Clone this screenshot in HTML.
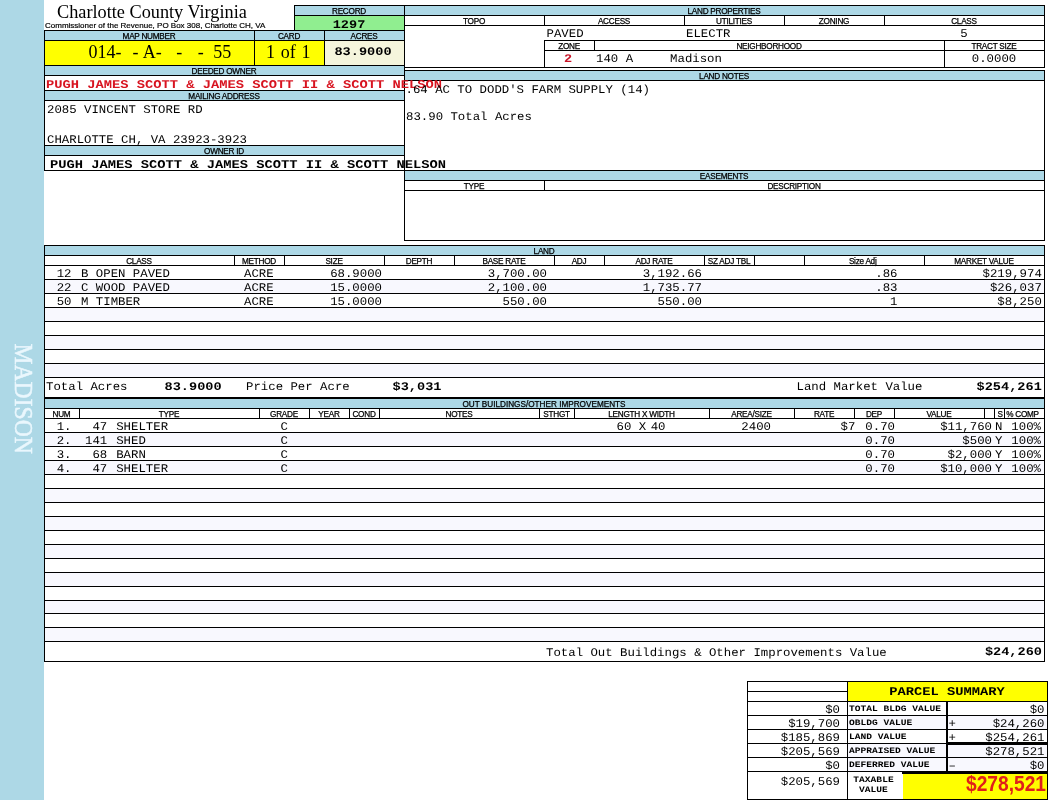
<!DOCTYPE html>
<html lang="en"><head><meta charset="utf-8"><title>Charlotte County Virginia - Property Record</title>
<style>
html,body{margin:0;padding:0;background:#fff}
#pg{will-change:transform;position:relative;width:1050px;height:800px;overflow:hidden;background:#fff;color:#000}
.r,.t{position:absolute}
.t{white-space:pre;line-height:1}
.lb{font:8.2px 'Liberation Sans',sans-serif;line-height:1;letter-spacing:-.25px;-webkit-text-stroke:.25px #000}
.m{font:12.35px 'Liberation Mono',monospace;line-height:1;text-rendering:geometricPrecision;transform:scaleY(0.95);transform-origin:0 9px;}
.mb{font:bold 13.6px 'Liberation Mono',monospace;line-height:1;text-rendering:geometricPrecision;transform:scaleY(0.86);transform-origin:0 9px;}
.mbs{font:bold 9.6px 'Liberation Mono',monospace;line-height:1;text-rendering:geometricPrecision;transform:scaleY(0.86);transform-origin:0 7px;}
.ps{font:bold 13.75px 'Liberation Mono',monospace;line-height:1;text-rendering:geometricPrecision;transform:scaleY(0.86);transform-origin:0 9px;}
.s17{font:18px 'Liberation Serif',serif;line-height:1;}
.s18{font:18.25px 'Liberation Serif',serif;line-height:1;}
.mbo{font:bold 13.75px 'Liberation Mono',monospace;line-height:1;text-rendering:geometricPrecision;transform:scaleY(0.86);transform-origin:0 9px;}
.big{font:bold 19.2px 'Liberation Sans',sans-serif;line-height:1;color:#e0201a;transform:scaleY(1.11);transform-origin:0 16px}
.sub{font:8px 'Liberation Sans',sans-serif;line-height:1;-webkit-text-stroke:.2px #000}
.sd{font:23.6px 'Liberation Serif',serif;line-height:1;}
.sd{left:0;top:0;color:#eaf7fd;-webkit-text-stroke:.5px #eaf7fd;transform-origin:0 0;transform:translate(14.8px,343.6px) rotate(90deg) scaleY(1.05) translateY(-19px)}
</style></head>
<body><div id="pg">
<div class="r" style="left:0px;top:0px;width:44px;height:800px;background:#add8e6"></div>
<div class="t sd">MADISON</div>
<div class="t s18" style="left:57px;top:3px">Charlotte County Virginia</div>
<div class="t sub" style="left:45px;top:22px">Commissioner of the Revenue, PO Box 308, Charlotte CH, VA</div>
<div class="r" style="left:295px;top:6px;width:109px;height:9px;background:#add8e6"></div>
<div class="r" style="left:295px;top:16px;width:109px;height:14px;background:#90ee90"></div>
<div class="r" style="left:294px;top:5px;width:111px;height:1px;background:#000"></div>
<div class="r" style="left:294px;top:15px;width:111px;height:1px;background:#000"></div>
<div class="r" style="left:294px;top:5px;width:1px;height:26px;background:#000"></div>
<div class="t lb" style="left:149px;width:400px;text-align:center;top:8px">RECORD</div>
<div class="t mb" style="left:149px;width:400px;text-align:center;top:19px">1297</div>
<div class="r" style="left:45px;top:31px;width:359px;height:9px;background:#add8e6"></div>
<div class="r" style="left:45px;top:41px;width:209px;height:24px;background:#ffff00"></div>
<div class="r" style="left:255px;top:41px;width:69px;height:24px;background:#ffff00"></div>
<div class="r" style="left:325px;top:41px;width:79px;height:24px;background:#f5f5dc"></div>
<div class="r" style="left:45px;top:66px;width:359px;height:9px;background:#add8e6"></div>
<div class="r" style="left:45px;top:91px;width:359px;height:9px;background:#add8e6"></div>
<div class="r" style="left:45px;top:146px;width:359px;height:9px;background:#add8e6"></div>
<div class="r" style="left:44px;top:30px;width:361px;height:1px;background:#000"></div>
<div class="r" style="left:44px;top:40px;width:361px;height:1px;background:#000"></div>
<div class="r" style="left:44px;top:65px;width:361px;height:1px;background:#000"></div>
<div class="r" style="left:44px;top:75px;width:361px;height:1px;background:#000"></div>
<div class="r" style="left:44px;top:90px;width:361px;height:1px;background:#000"></div>
<div class="r" style="left:44px;top:100px;width:361px;height:1px;background:#000"></div>
<div class="r" style="left:44px;top:145px;width:361px;height:1px;background:#000"></div>
<div class="r" style="left:44px;top:155px;width:361px;height:1px;background:#000"></div>
<div class="r" style="left:44px;top:170px;width:361px;height:1px;background:#000"></div>
<div class="r" style="left:44px;top:30px;width:1px;height:141px;background:#000"></div>
<div class="r" style="left:254px;top:30px;width:1px;height:36px;background:#000"></div>
<div class="r" style="left:324px;top:30px;width:1px;height:36px;background:#000"></div>
<div class="t lb" style="left:-51px;width:400px;text-align:center;top:33px">MAP NUMBER</div>
<div class="t lb" style="left:89px;width:400px;text-align:center;top:33px">CARD</div>
<div class="t lb" style="left:164px;width:400px;text-align:center;top:33px">ACRES</div>
<div class="t s17" style="left:88.4px;top:43px">014-</div>
<div class="t s17" style="left:132.5px;top:43px">-</div>
<div class="t s17" style="left:142.7px;top:43px">A-</div>
<div class="t s17" style="left:176.2px;top:43px">-</div>
<div class="t s17" style="left:197.7px;top:43px">-</div>
<div class="t s17" style="left:213.3px;top:43px">55</div>
<div class="t s17" style="left:88.2px;width:400px;text-align:center;top:43px;word-spacing:1.2px">1 of 1</div>
<div class="t mb" style="left:163px;width:400px;text-align:center;top:46px">83.9000</div>
<div class="t lb" style="left:24px;width:400px;text-align:center;top:68px">DEEDED OWNER</div>
<div class="t lb" style="left:24px;width:400px;text-align:center;top:93px">MAILING ADDRESS</div>
<div class="t m" style="left:47px;top:104px">2085 VINCENT STORE RD</div>
<div class="t m" style="left:47px;top:134px">CHARLOTTE CH, VA 23923-3923</div>
<div class="t lb" style="left:24px;width:400px;text-align:center;top:148px">OWNER ID</div>
<div class="r" style="left:405px;top:6px;width:639px;height:9px;background:#add8e6"></div>
<div class="r" style="left:404px;top:5px;width:641px;height:1px;background:#000"></div>
<div class="r" style="left:404px;top:15px;width:641px;height:1px;background:#000"></div>
<div class="r" style="left:404px;top:25px;width:641px;height:1px;background:#000"></div>
<div class="r" style="left:544px;top:40px;width:501px;height:1px;background:#000"></div>
<div class="r" style="left:544px;top:50px;width:501px;height:1px;background:#000"></div>
<div class="r" style="left:404px;top:67px;width:641px;height:1px;background:#000"></div>
<div class="r" style="left:404px;top:5px;width:1px;height:236px;background:#000"></div>
<div class="r" style="left:1044px;top:5px;width:1px;height:63px;background:#000"></div>
<div class="r" style="left:1044px;top:70px;width:1px;height:171px;background:#000"></div>
<div class="r" style="left:544px;top:15px;width:1px;height:11px;background:#000"></div>
<div class="r" style="left:684px;top:15px;width:1px;height:11px;background:#000"></div>
<div class="r" style="left:784px;top:15px;width:1px;height:11px;background:#000"></div>
<div class="r" style="left:884px;top:15px;width:1px;height:11px;background:#000"></div>
<div class="r" style="left:544px;top:40px;width:1px;height:28px;background:#000"></div>
<div class="r" style="left:594px;top:40px;width:1px;height:11px;background:#000"></div>
<div class="r" style="left:944px;top:40px;width:1px;height:28px;background:#000"></div>
<div class="t lb" style="left:524px;width:400px;text-align:center;top:8px">LAND PROPERTIES</div>
<div class="t lb" style="left:274px;width:400px;text-align:center;top:18px">TOPO</div>
<div class="t lb" style="left:414px;width:400px;text-align:center;top:18px">ACCESS</div>
<div class="t lb" style="left:534px;width:400px;text-align:center;top:18px">UTILITIES</div>
<div class="t lb" style="left:634px;width:400px;text-align:center;top:18px">ZONING</div>
<div class="t lb" style="left:764px;width:400px;text-align:center;top:18px">CLASS</div>
<div class="t m" style="left:546.5px;top:28px">PAVED</div>
<div class="t m" style="left:686px;top:28px">ELECTR</div>
<div class="t m" style="left:764px;width:400px;text-align:center;top:28px">5</div>
<div class="t lb" style="left:369px;width:400px;text-align:center;top:43px">ZONE</div>
<div class="t lb" style="left:569px;width:400px;text-align:center;top:43px">NEIGHBORHOOD</div>
<div class="t lb" style="left:794px;width:400px;text-align:center;top:43px">TRACT SIZE</div>
<div class="t mb" style="left:368px;width:400px;text-align:center;top:53px;color:#c81428">2</div>
<div class="t m" style="left:596px;top:53px">140 A     Madison</div>
<div class="t m" style="left:794px;width:400px;text-align:center;top:53px">0.0000</div>
<div class="r" style="left:405px;top:71px;width:639px;height:9px;background:#add8e6"></div>
<div class="r" style="left:404px;top:70px;width:641px;height:1px;background:#000"></div>
<div class="r" style="left:404px;top:80px;width:641px;height:1px;background:#000"></div>
<div class="t lb" style="left:524px;width:400px;text-align:center;top:73px">LAND NOTES</div>
<div class="t mbo" style="left:46px;top:79px;color:#d81420">PUGH JAMES SCOTT &amp; JAMES SCOTT II &amp; SCOTT NELSON</div>
<div class="t m" style="left:405.5px;top:84px">.64 AC TO DODD&#x27;S FARM SUPPLY (14)</div>
<div class="t m" style="left:406px;top:111px">83.90 Total Acres</div>
<div class="t mbo" style="left:50px;top:159px">PUGH JAMES SCOTT &amp; JAMES SCOTT II &amp; SCOTT NELSON</div>
<div class="r" style="left:405px;top:171px;width:639px;height:9px;background:#add8e6"></div>
<div class="r" style="left:404px;top:170px;width:641px;height:1px;background:#000"></div>
<div class="r" style="left:404px;top:180px;width:641px;height:1px;background:#000"></div>
<div class="r" style="left:404px;top:190px;width:641px;height:1px;background:#000"></div>
<div class="r" style="left:404px;top:240px;width:641px;height:1px;background:#000"></div>
<div class="r" style="left:544px;top:180px;width:1px;height:11px;background:#000"></div>
<div class="t lb" style="left:524px;width:400px;text-align:center;top:173px">EASEMENTS</div>
<div class="t lb" style="left:274px;width:400px;text-align:center;top:183px">TYPE</div>
<div class="t lb" style="left:594px;width:400px;text-align:center;top:183px">DESCRIPTION</div>
<div class="r" style="left:45px;top:246px;width:999px;height:9px;background:#add8e6"></div>
<div class="r" style="left:44px;top:245px;width:1001px;height:1px;background:#000"></div>
<div class="r" style="left:44px;top:255px;width:1001px;height:1px;background:#000"></div>
<div class="r" style="left:44px;top:265px;width:1001px;height:1px;background:#000"></div>
<div class="r" style="left:44px;top:245px;width:1px;height:417px;background:#000"></div>
<div class="r" style="left:1044px;top:245px;width:1px;height:417px;background:#000"></div>
<div class="r" style="left:234px;top:255px;width:1px;height:11px;background:#000"></div>
<div class="r" style="left:284px;top:255px;width:1px;height:11px;background:#000"></div>
<div class="r" style="left:384px;top:255px;width:1px;height:11px;background:#000"></div>
<div class="r" style="left:454px;top:255px;width:1px;height:11px;background:#000"></div>
<div class="r" style="left:554px;top:255px;width:1px;height:11px;background:#000"></div>
<div class="r" style="left:604px;top:255px;width:1px;height:11px;background:#000"></div>
<div class="r" style="left:704px;top:255px;width:1px;height:11px;background:#000"></div>
<div class="r" style="left:754px;top:255px;width:1px;height:11px;background:#000"></div>
<div class="r" style="left:804px;top:255px;width:1px;height:11px;background:#000"></div>
<div class="r" style="left:924px;top:255px;width:1px;height:11px;background:#000"></div>
<div class="t lb" style="left:344px;width:400px;text-align:center;top:248px">LAND</div>
<div class="t lb" style="left:-61px;width:400px;text-align:center;top:258px">CLASS</div>
<div class="t lb" style="left:59px;width:400px;text-align:center;top:258px">METHOD</div>
<div class="t lb" style="left:134px;width:400px;text-align:center;top:258px">SIZE</div>
<div class="t lb" style="left:219px;width:400px;text-align:center;top:258px">DEPTH</div>
<div class="t lb" style="left:304px;width:400px;text-align:center;top:258px">BASE RATE</div>
<div class="t lb" style="left:379px;width:400px;text-align:center;top:258px">ADJ</div>
<div class="t lb" style="left:454px;width:400px;text-align:center;top:258px">ADJ RATE</div>
<div class="t lb" style="left:529px;width:400px;text-align:center;top:258px">SZ ADJ TBL</div>
<div class="t lb" style="left:662.7px;width:400px;text-align:center;top:258px">Size Adj</div>
<div class="t lb" style="left:784px;width:400px;text-align:center;top:258px">MARKET VALUE</div>
<div class="r" style="left:44px;top:279px;width:1001px;height:1px;background:#000"></div>
<div class="r" style="left:44px;top:293px;width:1001px;height:1px;background:#000"></div>
<div class="r" style="left:45px;top:280px;width:999px;height:13px;background:#f8f8fe"></div>
<div class="r" style="left:44px;top:307px;width:1001px;height:1px;background:#000"></div>
<div class="r" style="left:44px;top:321px;width:1001px;height:1px;background:#000"></div>
<div class="r" style="left:45px;top:308px;width:999px;height:13px;background:#f8f8fe"></div>
<div class="r" style="left:44px;top:335px;width:1001px;height:1px;background:#000"></div>
<div class="r" style="left:44px;top:349px;width:1001px;height:1px;background:#000"></div>
<div class="r" style="left:45px;top:336px;width:999px;height:13px;background:#f8f8fe"></div>
<div class="r" style="left:44px;top:363px;width:1001px;height:1px;background:#000"></div>
<div class="r" style="left:44px;top:377px;width:1001px;height:1px;background:#000"></div>
<div class="r" style="left:45px;top:364px;width:999px;height:13px;background:#f8f8fe"></div>
<div class="t m" style="left:56.7px;top:268px">12</div>
<div class="t m" style="left:81px;top:268px">B OPEN PAVED</div>
<div class="t m" style="left:244px;top:268px">ACRE</div>
<div class="t m" style="right:668px;top:268px">68.9000</div>
<div class="t m" style="right:503px;top:268px">3,700.00</div>
<div class="t m" style="right:348px;top:268px">3,192.66</div>
<div class="t m" style="right:152.5px;top:268px">.86</div>
<div class="t m" style="right:8.2px;top:268px">$219,974</div>
<div class="t m" style="left:56.7px;top:282px">22</div>
<div class="t m" style="left:81px;top:282px">C WOOD PAVED</div>
<div class="t m" style="left:244px;top:282px">ACRE</div>
<div class="t m" style="right:668px;top:282px">15.0000</div>
<div class="t m" style="right:503px;top:282px">2,100.00</div>
<div class="t m" style="right:348px;top:282px">1,735.77</div>
<div class="t m" style="right:152.5px;top:282px">.83</div>
<div class="t m" style="right:8.2px;top:282px">$26,037</div>
<div class="t m" style="left:56.7px;top:296px">50</div>
<div class="t m" style="left:81px;top:296px">M TIMBER</div>
<div class="t m" style="left:244px;top:296px">ACRE</div>
<div class="t m" style="right:668px;top:296px">15.0000</div>
<div class="t m" style="right:503px;top:296px">550.00</div>
<div class="t m" style="right:348px;top:296px">550.00</div>
<div class="t m" style="right:152.5px;top:296px">1</div>
<div class="t m" style="right:8.2px;top:296px">$8,250</div>
<div class="t m" style="left:46px;top:381px">Total Acres</div>
<div class="t mb" style="left:164.5px;top:381px">83.9000</div>
<div class="t m" style="left:246px;top:381px">Price Per Acre</div>
<div class="t mb" style="left:392.5px;top:381px">$3,031</div>
<div class="t m" style="left:796.5px;top:381px">Land Market Value</div>
<div class="t mb" style="right:8.2px;top:381px">$254,261</div>
<div class="r" style="left:44px;top:397px;width:1001px;height:2px;background:#000"></div>
<div class="r" style="left:45px;top:399px;width:999px;height:9px;background:#add8e6"></div>
<div class="r" style="left:44px;top:408px;width:1001px;height:1px;background:#000"></div>
<div class="r" style="left:44px;top:418px;width:1001px;height:1px;background:#000"></div>
<div class="r" style="left:79px;top:408px;width:1px;height:11px;background:#000"></div>
<div class="r" style="left:259px;top:408px;width:1px;height:11px;background:#000"></div>
<div class="r" style="left:309px;top:408px;width:1px;height:11px;background:#000"></div>
<div class="r" style="left:349px;top:408px;width:1px;height:11px;background:#000"></div>
<div class="r" style="left:379px;top:408px;width:1px;height:11px;background:#000"></div>
<div class="r" style="left:539px;top:408px;width:1px;height:11px;background:#000"></div>
<div class="r" style="left:574px;top:408px;width:1px;height:11px;background:#000"></div>
<div class="r" style="left:709px;top:408px;width:1px;height:11px;background:#000"></div>
<div class="r" style="left:794px;top:408px;width:1px;height:11px;background:#000"></div>
<div class="r" style="left:854px;top:408px;width:1px;height:11px;background:#000"></div>
<div class="r" style="left:894px;top:408px;width:1px;height:11px;background:#000"></div>
<div class="r" style="left:984px;top:408px;width:1px;height:11px;background:#000"></div>
<div class="r" style="left:994px;top:408px;width:1px;height:11px;background:#000"></div>
<div class="r" style="left:1004px;top:408px;width:1px;height:11px;background:#000"></div>
<div class="t lb" style="left:344px;width:400px;text-align:center;top:401px;letter-spacing:0">OUT BUILDINGS/OTHER IMPROVEMENTS</div>
<div class="t lb" style="left:-138.5px;width:400px;text-align:center;top:411px">NUM</div>
<div class="t lb" style="left:-31px;width:400px;text-align:center;top:411px">TYPE</div>
<div class="t lb" style="left:84px;width:400px;text-align:center;top:411px">GRADE</div>
<div class="t lb" style="left:129px;width:400px;text-align:center;top:411px">YEAR</div>
<div class="t lb" style="left:164px;width:400px;text-align:center;top:411px">COND</div>
<div class="t lb" style="left:259px;width:400px;text-align:center;top:411px">NOTES</div>
<div class="t lb" style="left:356.5px;width:400px;text-align:center;top:411px">STHGT</div>
<div class="t lb" style="left:441.5px;width:400px;text-align:center;top:411px">LENGTH X WIDTH</div>
<div class="t lb" style="left:551.5px;width:400px;text-align:center;top:411px">AREA/SIZE</div>
<div class="t lb" style="left:624px;width:400px;text-align:center;top:411px">RATE</div>
<div class="t lb" style="left:674px;width:400px;text-align:center;top:411px">DEP</div>
<div class="t lb" style="left:739px;width:400px;text-align:center;top:411px">VALUE</div>
<div class="t lb" style="left:800px;width:400px;text-align:center;top:411px">S</div>
<div class="t lb" style="left:822.5px;width:400px;text-align:center;top:411px">% COMP</div>
<div class="r" style="left:44px;top:432px;width:1001px;height:1px;background:#000"></div>
<div class="r" style="left:45px;top:433px;width:999px;height:13px;background:#f8f8fe"></div>
<div class="r" style="left:44px;top:446px;width:1001px;height:1px;background:#000"></div>
<div class="r" style="left:44px;top:460px;width:1001px;height:1px;background:#000"></div>
<div class="r" style="left:45px;top:461px;width:999px;height:13px;background:#f8f8fe"></div>
<div class="r" style="left:44px;top:474px;width:1001px;height:1px;background:#000"></div>
<div class="r" style="left:44px;top:488px;width:1001px;height:1px;background:#000"></div>
<div class="r" style="left:45px;top:489px;width:999px;height:13px;background:#f8f8fe"></div>
<div class="r" style="left:44px;top:502px;width:1001px;height:1px;background:#000"></div>
<div class="r" style="left:44px;top:516px;width:1001px;height:1px;background:#000"></div>
<div class="r" style="left:45px;top:517px;width:999px;height:13px;background:#f8f8fe"></div>
<div class="r" style="left:44px;top:530px;width:1001px;height:1px;background:#000"></div>
<div class="r" style="left:44px;top:544px;width:1001px;height:1px;background:#000"></div>
<div class="r" style="left:45px;top:545px;width:999px;height:13px;background:#f8f8fe"></div>
<div class="r" style="left:44px;top:558px;width:1001px;height:1px;background:#000"></div>
<div class="r" style="left:44px;top:572px;width:1001px;height:1px;background:#000"></div>
<div class="r" style="left:45px;top:573px;width:999px;height:13px;background:#f8f8fe"></div>
<div class="r" style="left:44px;top:586px;width:1001px;height:1px;background:#000"></div>
<div class="r" style="left:44px;top:600px;width:1001px;height:1px;background:#000"></div>
<div class="r" style="left:45px;top:601px;width:999px;height:12px;background:#f8f8fe"></div>
<div class="r" style="left:44px;top:613px;width:1001px;height:1px;background:#000"></div>
<div class="r" style="left:44px;top:627px;width:1001px;height:1px;background:#000"></div>
<div class="r" style="left:45px;top:628px;width:999px;height:13px;background:#f8f8fe"></div>
<div class="r" style="left:44px;top:641px;width:1001px;height:1px;background:#000"></div>
<div class="r" style="left:44px;top:661px;width:1001px;height:1px;background:#000"></div>
<div class="t m" style="left:56.7px;top:421px">1.</div>
<div class="t m" style="right:942.8px;top:421px">47</div>
<div class="t m" style="left:116.2px;top:421px">SHELTER</div>
<div class="t m" style="left:280.5px;top:421px">C</div>
<div class="t m" style="left:616.5px;top:421px">60 X</div>
<div class="t m" style="left:650.7px;top:421px">40</div>
<div class="t m" style="right:279px;top:421px">2400</div>
<div class="t m" style="right:194.7px;top:421px">$7</div>
<div class="t m" style="right:155px;top:421px">0.70</div>
<div class="t m" style="right:58px;top:421px">$11,760</div>
<div class="t m" style="left:995px;top:421px">N</div>
<div class="t m" style="right:9px;top:421px">100%</div>
<div class="t m" style="left:56.7px;top:435px">2.</div>
<div class="t m" style="right:942.8px;top:435px">141</div>
<div class="t m" style="left:116.2px;top:435px">SHED</div>
<div class="t m" style="left:280.5px;top:435px">C</div>
<div class="t m" style="right:155px;top:435px">0.70</div>
<div class="t m" style="right:58px;top:435px">$500</div>
<div class="t m" style="left:995px;top:435px">Y</div>
<div class="t m" style="right:9px;top:435px">100%</div>
<div class="t m" style="left:56.7px;top:449px">3.</div>
<div class="t m" style="right:942.8px;top:449px">68</div>
<div class="t m" style="left:116.2px;top:449px">BARN</div>
<div class="t m" style="left:280.5px;top:449px">C</div>
<div class="t m" style="right:155px;top:449px">0.70</div>
<div class="t m" style="right:58px;top:449px">$2,000</div>
<div class="t m" style="left:995px;top:449px">Y</div>
<div class="t m" style="right:9px;top:449px">100%</div>
<div class="t m" style="left:56.7px;top:463px">4.</div>
<div class="t m" style="right:942.8px;top:463px">47</div>
<div class="t m" style="left:116.2px;top:463px">SHELTER</div>
<div class="t m" style="left:280.5px;top:463px">C</div>
<div class="t m" style="right:155px;top:463px">0.70</div>
<div class="t m" style="right:58px;top:463px">$10,000</div>
<div class="t m" style="left:995px;top:463px">Y</div>
<div class="t m" style="right:9px;top:463px">100%</div>
<div class="t m" style="left:546px;top:647px">Total Out Buildings &amp; Other Improvements Value</div>
<div class="t mb" style="right:8px;top:646px">$24,260</div>
<div class="r" style="left:848px;top:682px;width:199px;height:19px;background:#ffff00"></div>
<div class="r" style="left:903px;top:774px;width:144px;height:25px;background:#ffff00"></div>
<div class="r" style="left:747px;top:681px;width:101px;height:1px;background:#000"></div>
<div class="r" style="left:747px;top:691px;width:101px;height:1px;background:#000"></div>
<div class="r" style="left:747px;top:701px;width:101px;height:1px;background:#000"></div>
<div class="r" style="left:747px;top:715px;width:101px;height:1px;background:#000"></div>
<div class="r" style="left:747px;top:729px;width:101px;height:1px;background:#000"></div>
<div class="r" style="left:747px;top:743px;width:101px;height:1px;background:#000"></div>
<div class="r" style="left:747px;top:757px;width:101px;height:1px;background:#000"></div>
<div class="r" style="left:747px;top:771px;width:101px;height:1px;background:#000"></div>
<div class="r" style="left:747px;top:799px;width:101px;height:1px;background:#000"></div>
<div class="r" style="left:847px;top:681px;width:201px;height:1px;background:#000"></div>
<div class="r" style="left:847px;top:701px;width:201px;height:1px;background:#000"></div>
<div class="r" style="left:847px;top:799px;width:201px;height:1px;background:#000"></div>
<div class="r" style="left:847px;top:715px;width:201px;height:1px;background:#000"></div>
<div class="r" style="left:847px;top:729px;width:201px;height:1px;background:#000"></div>
<div class="r" style="left:847px;top:757px;width:201px;height:1px;background:#000"></div>
<div class="r" style="left:847px;top:743px;width:100px;height:1px;background:#000"></div>
<div class="r" style="left:946px;top:742px;width:102px;height:3px;background:#000"></div>
<div class="r" style="left:847px;top:771px;width:201px;height:1px;background:#000"></div>
<div class="r" style="left:902px;top:771px;width:146px;height:3px;background:#000"></div>
<div class="r" style="left:747px;top:681px;width:1px;height:119px;background:#000"></div>
<div class="r" style="left:847px;top:681px;width:1px;height:119px;background:#000"></div>
<div class="r" style="left:1047px;top:681px;width:1px;height:119px;background:#000"></div>
<div class="r" style="left:946px;top:701px;width:2px;height:71px;background:#000"></div>
<div class="r" style="left:848px;top:716px;width:98px;height:13px;background:#f8f8fe"></div>
<div class="r" style="left:948px;top:716px;width:99px;height:13px;background:#f8f8fe"></div>
<div class="r" style="left:848px;top:744px;width:98px;height:13px;background:#f8f8fe"></div>
<div class="r" style="left:948px;top:745px;width:99px;height:12px;background:#f8f8fe"></div>
<div class="r" style="left:848px;top:758px;width:98px;height:13px;background:#f8f8fe"></div>
<div class="r" style="left:948px;top:758px;width:99px;height:13px;background:#f8f8fe"></div>
<div class="t ps" style="left:747px;width:400px;text-align:center;top:686px">PARCEL SUMMARY</div>
<div class="t m" style="right:210px;top:704px">$0</div>
<div class="t mbs" style="left:849px;top:704px">TOTAL BLDG VALUE</div>
<div class="t m" style="right:5.5px;top:704px">$0</div>
<div class="t m" style="right:210px;top:718px">$19,700</div>
<div class="t mbs" style="left:849px;top:718px">OBLDG VALUE</div>
<div class="t m" style="right:5.5px;top:718px">$24,260</div>
<div class="t m" style="left:948.5px;top:718px">+</div>
<div class="t m" style="right:210px;top:732px">$185,869</div>
<div class="t mbs" style="left:849px;top:732px">LAND VALUE</div>
<div class="t m" style="right:5.5px;top:732px">$254,261</div>
<div class="t m" style="left:948.5px;top:732px">+</div>
<div class="t m" style="right:210px;top:746px">$205,569</div>
<div class="t mbs" style="left:849px;top:746px">APPRAISED VALUE</div>
<div class="t m" style="right:5.5px;top:746px">$278,521</div>
<div class="t m" style="right:210px;top:760px">$0</div>
<div class="t mbs" style="left:849px;top:760px">DEFERRED VALUE</div>
<div class="t m" style="right:5.5px;top:760px">$0</div>
<div class="t m" style="left:948.5px;top:760px">–</div>
<div class="t m" style="right:210px;top:776px">$205,569</div>
<div class="t mbs" style="left:673.5px;width:400px;text-align:center;top:775px">TAXABLE</div>
<div class="t mbs" style="left:673.5px;width:400px;text-align:center;top:785px">VALUE</div>
<div class="t big" style="right:4px;top:775px">$278,521</div>
</div></body></html>
